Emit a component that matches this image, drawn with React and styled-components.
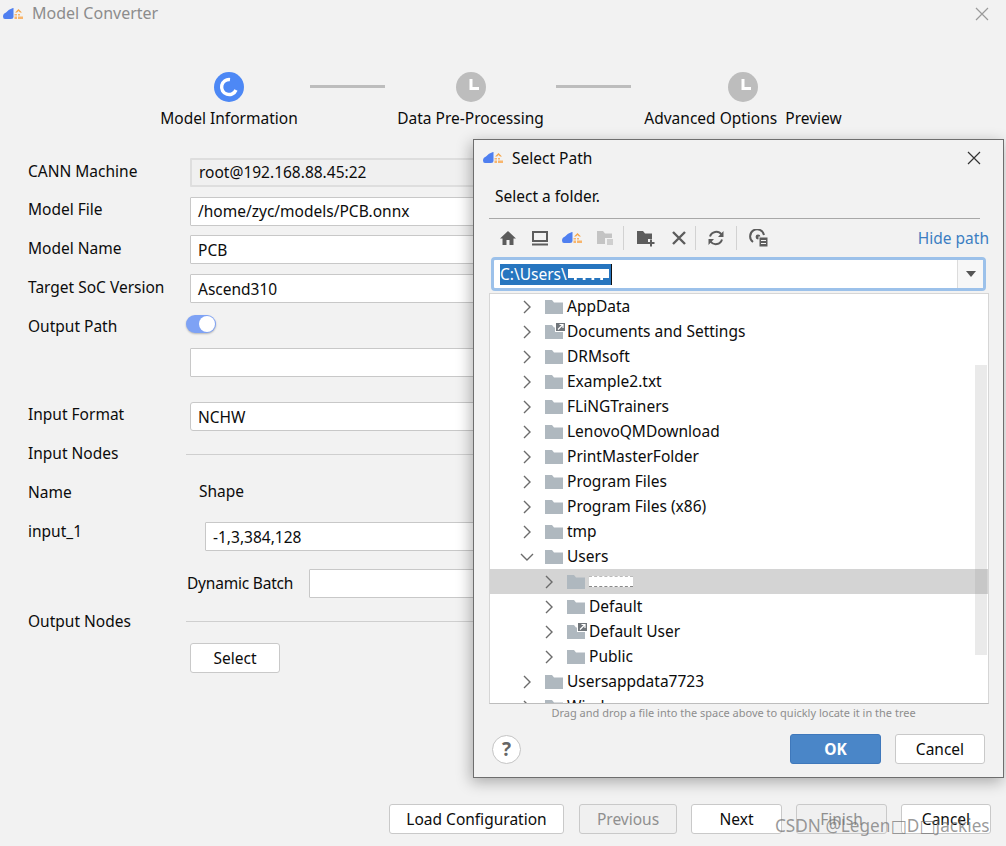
import React from "react";
import styled, { createGlobalStyle } from "styled-components";

const Global = createGlobalStyle`
  html, body { margin: 0; padding: 0; background: #f2f2f2; }
  * { box-sizing: border-box; }
  body { font-family: "Noto Sans", "Noto Sans CJK SC", sans-serif; font-size: 15.5px; color: #0c0c0c; }
`;

const Page = styled.div`
  position: relative; width: 1006px; height: 846px; overflow: hidden;
  display: flex; flex-direction: column; background: #f2f2f2;
`;
const TitleBar = styled.div`
  height: 28px; display: flex; align-items: center; padding: 0 17px 0 3px; gap: 9px;
  color: #8c8c8c; font-size: 16px;
`;
const TitleText = styled.span`flex: 1; transform: translateY(-1px);`;
const DialogTitle = styled.span`flex: 1;`;
const Stepper = styled.div`
  margin-top: 44px; height: 60px; display: flex; padding-left: 129px; align-items: flex-start;
`;
const Step = styled.div`
  width: ${p => p.$w}px; display: flex; flex-direction: column; align-items: center; gap: 6px;
  white-space: nowrap; line-height: 20px;
`;
const StepLine = styled.div`
  width: 75px; height: 3px; background: #bdbdbd; margin: 13px ${p => p.$r}px 0 ${p => p.$l}px;
`;
const Form = styled.div`
  margin-top: 26px; padding: 0 16px 0 28px; display: flex; flex-direction: column;
`;
const Row = styled.div`
  display: flex; align-items: center;
  min-height: ${p => p.$h || 29}px; margin-top: ${p => p.$mt || 0}px; line-height: 20px;
`;
const Label = styled.div`
  width: 158px; flex: none; white-space: nowrap;
  transform: translateY(${p => p.$dy ?? -1}px);
`;
const ShapeLabel = styled.div`
  margin-left: 13px; white-space: nowrap; transform: translateY(-1px);
`;
const InputText = styled.span`transform: translateY(${p => p.$dy ?? 0}px);`;
const Input = styled.div`
  flex: 1; height: 29px; margin-left: ${p => p.$ml ?? 4}px; padding: 0 7px;
  display: flex; align-items: center; white-space: nowrap;
  background: ${p => p.$ro ? "#f0f0f0" : "#fff"};
  border: ${p => p.$ro ? "2px solid #dedede" : "1px solid #c8c8c8"};
  border-radius: ${p => p.$round ? 3 : 1}px;
`;
const Toggle = styled.div`
  width: 30px; height: 18px; border-radius: 9px; background: #7ea2f5; position: relative;
  box-shadow: 0 1px 2px rgba(0,0,0,.25); transform: translateY(-3px);
  &::after { content: ""; position: absolute; right: 1px; top: 1px; width: 16px; height: 16px; border-radius: 50%; background: #fff; }
`;
const Rule = styled.div`flex: 1; height: 1px; background: #cfcfcf;`;
const Btn = styled.div`
  width: ${p => p.$w}px; height: 30px; flex: none; display: flex; align-items: center; justify-content: center;
  border-radius: 3px; white-space: nowrap; padding-bottom: 1px; margin-right: ${p => p.$mr || 0}px;
  border: 1px solid ${p => p.$primary ? "#3f78bb" : "#c9c9c9"};
  background: ${p => p.$primary ? "#4a86c8" : p.$off ? "#f0f0f0" : "#fff"};
  color: ${p => p.$primary ? "#fff" : p.$off ? "#8f8f8f" : "#0c0c0c"};
  font-weight: ${p => p.$primary ? 700 : 400};
`;
const SelectBtn = styled(Btn)`margin-left: 4px;`;
const Footer = styled.div`
  margin-top: auto; padding: 0 15px 12px 0; display: flex; justify-content: flex-end; gap: 14px;
`;
const Dialog = styled.div`
  position: absolute; left: 473px; top: 139px; width: 531px; height: 639px;
  background: #f2f2f2; border: 1px solid #6e6e6e;
  box-shadow: -2px 4px 14px rgba(0,0,0,.3);
  display: flex; flex-direction: column;
`;
const DialogHead = styled.div`
  height: 36px; display: flex; align-items: center; gap: 9px; padding: 0 22px 0 9px;
`;
const Hint = styled.div`margin: 9px 0 0 21px; line-height: 22px;`;
const Divider = styled.div`height: 1px; background: #a8a8a8; margin: 11px 23px 0 15px;`;
const Toolbar = styled.div`
  height: 36px; display: flex; align-items: center; padding: 0 14px 0 25px; margin-top: 1px;
`;
const ToolIcon = styled.div`
  width: ${p => p.$w || 18}px; height: 18px; margin-right: ${p => p.$mr || 0}px; flex: none;
  display: flex; align-items: center;
`;
const Sep = styled.div`width: 1px; height: 24px; background: #d2d2d2; margin-right: ${p => p.$mr}px; flex: none;`;
const HideLink = styled.div`margin-left: auto; color: #3c7ec2;`;
const Combo = styled.div`
  height: 34px; margin: 1px 17px 0 17px; display: flex; background: #fff;
  border: 3px solid #9cc1ea; border-radius: 4px;
`;
const ComboText = styled.div`flex: 1; display: flex; align-items: center; padding-left: 6px;`;
const Selected = styled.span`
  display: flex; align-items: center; height: 21px; background: #2675bf; color: #fff;
  border-right: 1px solid #111; padding-right: 2px;
`;
const Scribble = styled.span`width: 41px; height: 11px; margin-left: 1px; background: #fff; border-bottom: 2px dashed #2675bf; display: block;`;
const ComboArrow = styled.div`
  width: 26px; border-left: 1px solid #dcdcdc; display: flex; align-items: center; justify-content: center;
  background: #f7f7f7;
  &::after { content: ""; border: 5px solid transparent; border-top: 6px solid #555; border-bottom: 0; }
`;
const Tree = styled.div`
  position: relative; height: 411px; margin: 2px 14px 0 15px; background: #fff;
  border: 1px solid #d6d6d6; border-bottom-color: #bdbdbd; overflow: hidden;
`;
const TreeRow = styled.div`
  height: 25px; display: flex; align-items: center; white-space: nowrap;
  padding-left: ${p => 30 + p.$lvl * 22}px;
  background: ${p => p.$sel ? "#d4d4d4" : "transparent"};
`;
const Chevron = styled.div`width: 14px; height: 14px; flex: none; margin-right: 10px; display: flex; color: #6b6b6b;`;
const TreeName = styled.span`margin-left: 2px; transform: translateY(-1px);`;
const RowBlot = styled.span`width: 44px; height: 11px; margin-left: 2px; background: #fff; border-top: 1px dashed #bbb; border-bottom: 1px dashed #888;`;
const Scrollbar = styled.div`
  position: absolute; right: 1px; top: 71px; width: 12px; height: 290px; background: rgba(150,150,150,.2);
`;
const DragHint = styled.div`
  text-align: center; font-size: 11px; color: #8e8e8e; line-height: 16px; margin: 1px 10px 0 0;
`;
const DialogFoot = styled.div`
  margin-top: 13px; display: flex; align-items: center; padding: 0 18px 0 18px; gap: 14px;
`;
const Help = styled.div`
  width: 29px; height: 29px; border-radius: 50%; border: 1px solid #c4c4c4; background: #fff;
  margin-right: auto; display: flex; align-items: center; justify-content: center;
  font-weight: 700; font-size: 19px; color: #666;
`;
const Watermark = styled.div`
  position: absolute; left: 775px; top: 813px; font-size: 17.2px; line-height: 26px; white-space: nowrap;
  color: rgba(110,110,110,.7); font-family: "Noto Sans", "DejaVu Sans", sans-serif;
`;
const DynLabel = styled.div`
  margin-left: 1px; white-space: nowrap; width: 122px; flex: none; transform: translateY(-1px);
  letter-spacing: -0.2px;
`;

const Logo = () => (
  <svg width="20" height="12" viewBox="0 0 20 12" style={{ flex: "none" }}>
    <path d="M0 8.5 Q0 5.5 3 4.5 Q5.5 1 10 0 L10.5 0 V9 Q10.5 11 8 11 H2 Q0 11 0 8.5Z" fill="#4f7ff0" />
    <path d="M12 4.5 L15.5 1 L19 4.5 H17 L15.5 3 L14 4.5Z" fill="#f5a54a" />
    <path d="M11.5 6h2.5v1.5h-2.5zM15 6h2v1.5h-2zM11.5 8.5h2.5v2.5h-2.5zM15 8.5h5v2.5h-5z" fill="#f8b56c" />
  </svg>
);
const Spin = () => (
  <svg width="30" height="30" viewBox="0 0 30 30">
    <circle cx="15" cy="15" r="15" fill="#4d88f5" />
    <path d="M16 7.6 A7.5 7.5 0 1 0 22 18" fill="none" stroke="#fff" strokeWidth="3.4" />
  </svg>
);
const Clock = () => (
  <svg width="30" height="30" viewBox="0 0 30 30">
    <circle cx="15" cy="15" r="15" fill="#bdbdbd" />
    <path d="M15 7 V16.5 H23" fill="none" stroke="#fff" strokeWidth="3" />
  </svg>
);
const CloseX = ({ c, s = 14 }) => (
  <svg width={s} height={s} viewBox="0 0 14 14"><path d="M1 1 L13 13 M13 1 L1 13" stroke={c} strokeWidth="1.2" fill="none" /></svg>
);
const Folder = ({ link }) => (
  <svg width="21" height="18" viewBox="0 0 21 18" style={{ flex: "none" }}>
    <path d="M1 2 H8 L10 4.5 H19 V16 H1Z" fill="#afb8bf" />
    {link && <>
      <rect x="11" y="0" width="10" height="9" fill="#fff" />
      <rect x="12" y="0" width="9" height="8" fill="#70757a" />
      <path d="M14 6.5 L19 1.5 M15.5 1.5 H19 V5" stroke="#fff" strokeWidth="1.2" fill="none" />
    </>}
  </svg>
);
const ChevR = () => (
  <svg width="14" height="14" viewBox="0 0 14 14"><path d="M4 1 L10 7 L4 13" fill="none" stroke="currentColor" strokeWidth="1.4" /></svg>
);
const ChevD = () => (
  <svg width="14" height="14" viewBox="0 0 14 14"><path d="M1 4 L7 10 L13 4" fill="none" stroke="currentColor" strokeWidth="1.4" /></svg>
);
const T = ({ children, w = 18 }) => <svg width={w} height="18" viewBox={`0 0 ${w} 18`}>{children}</svg>;

const tree = [
  { n: "AppData", l: 0 },
  { n: "Documents and Settings", l: 0, link: 1 },
  { n: "DRMsoft", l: 0 },
  { n: "Example2.txt", l: 0 },
  { n: "FLiNGTrainers", l: 0 },
  { n: "LenovoQMDownload", l: 0 },
  { n: "PrintMasterFolder", l: 0 },
  { n: "Program Files", l: 0 },
  { n: "Program Files (x86)", l: 0 },
  { n: "tmp", l: 0 },
  { n: "Users", l: 0, open: 1 },
  { n: "", l: 1, sel: 1 },
  { n: "Default", l: 1 },
  { n: "Default User", l: 1, link: 1 },
  { n: "Public", l: 1 },
  { n: "Usersappdata7723", l: 0 },
  { n: "Windows", l: 0 },
];

export default function App() {
  return (
    <Page>
      <Global />
      <TitleBar>
        <Logo />
        <TitleText>Model Converter</TitleText>
        <CloseX c="#9a9a9a" />
      </TitleBar>
      <Stepper>
        <Step $w={200}><Spin />Model Information</Step>
        <StepLine $l={-19} $r={0} />
        <Step $w={171}><Clock />Data Pre-Processing</Step>
        <StepLine $l={0} $r={0} />
        <Step $w={224}><Clock /><span>Advanced Options&nbsp;&nbsp;Preview</span></Step>
      </Stepper>
      <Form>
        <Row><Label $dy={-2}>CANN Machine</Label><Input $ro><InputText $dy={-1}>root@192.168.88.45:22</InputText></Input></Row>
        <Row $mt={10}><Label $dy={-3}>Model File</Label><Input><InputText $dy={-1}>/home/zyc/models/PCB.onnx</InputText></Input></Row>
        <Row $mt={9}><Label $dy={-2}>Model Name</Label><Input><InputText>PCB</InputText></Input></Row>
        <Row $mt={10}><Label $dy={-2}>Target SoC Version</Label><Input><InputText>Ascend310</InputText></Input></Row>
        <Row $mt={9}><Label>Output Path</Label><Toggle /></Row>
        <Row $mt={7}><Label /><Input /></Row>
        <Row $mt={25}><Label $dy={-3}>Input Format</Label><Input $round><InputText>NCHW</InputText></Input></Row>
        <Row $mt={13} $h={20}><Label>Input Nodes</Label><Rule /></Row>
        <Row $mt={18} $h={20}><Label $dy={0}>Name</Label><ShapeLabel>Shape</ShapeLabel></Row>
        <Row $mt={20}><Label $dy={-6}>input_1</Label><Input $ml={19}><InputText>-1,3,384,128</InputText></Input></Row>
        <Row $mt={18}><Label /><DynLabel>Dynamic Batch</DynLabel><Input $ml={0} /></Row>
        <Row $mt={13} $h={20}><Label $dy={0}>Output Nodes</Label><Rule /></Row>
        <Row $mt={12}><Label /><SelectBtn $w={90}>Select</SelectBtn></Row>
      </Form>
      <Footer>
        <Btn $w={175} $mr={1}>Load Configuration</Btn>
        <Btn $w={98} $off>Previous</Btn>
        <Btn $w={91}>Next</Btn>
        <Btn $w={91} $off>Finish</Btn>
        <Btn $w={90}>Cancel</Btn>
      </Footer>

      <Dialog>
        <DialogHead>
          <Logo />
          <DialogTitle>Select Path</DialogTitle>
          <CloseX c="#333" />
        </DialogHead>
        <Hint>Select a folder.</Hint>
        <Divider />
        <Toolbar>
          <ToolIcon $mr={14}><T><path d="M9 2 L17 9.5 H14.5 V16 H10.5 V11 H7.5 V16 H3.5 V9.5 H1Z" fill="#5c5c5c" /></T></ToolIcon>
          <ToolIcon $mr={13}><T><path d="M1 2 H17 V13 H1Z M3 4 V11 H15 V4Z M1 14.5 H17 V16.5 H1Z" fill="#5c5c5c" fillRule="evenodd" /></T></ToolIcon>
          <ToolIcon $w={21} $mr={13}><Logo /></ToolIcon>
          <ToolIcon $mr={9}><T><path d="M1 2 H7 L9 4.5 H16 V9 H9 V15 H1Z" fill="#c4c4c4" /><rect x="11" y="10" width="6" height="6" fill="#cfcfcf" /></T></ToolIcon>
          <Sep $mr={12} />
          <ToolIcon $w={19} $mr={15}><T w={19}><path d="M1 2 H7 L9 4.5 H16 V10 H12 V15 H1Z" fill="#5c5c5c" /><path d="M15 10.5 V17.5 M11.5 14 H18.5" stroke="#5c5c5c" strokeWidth="2" /></T></ToolIcon>
          <ToolIcon $mr={7}><T><path d="M3 3 L15 15 M15 3 L3 15" stroke="#5c5c5c" strokeWidth="2.4" /></T></ToolIcon>
          <Sep $mr={11} />
          <ToolIcon $mr={11}><T><path d="M3 7.5 A6.5 6.5 0 0 1 14.5 5.5 M15 10.5 A6.5 6.5 0 0 1 3.5 12.5" fill="none" stroke="#5c5c5c" strokeWidth="2" /><path d="M16.5 2 V8 H11Z M1.5 16 V10 H7Z" fill="#5c5c5c" /></T></ToolIcon>
          <Sep $mr={12} />
          <ToolIcon $w={20}><T w={20}><path d="M4 13 A7 7 0 1 1 15 6" fill="none" stroke="#5c5c5c" strokeWidth="2" /><circle cx="9" cy="8" r="2.4" fill="#5c5c5c" /><rect x="10" y="8" width="9" height="10" fill="#5c5c5c" stroke="#f2f2f2" /><path d="M12 11.5 H17 M12 14.5 H17" stroke="#f2f2f2" /></T></ToolIcon>
          <HideLink>Hide path</HideLink>
        </Toolbar>
        <Combo>
          <ComboText><Selected>C:\Users\<Scribble /></Selected></ComboText>
          <ComboArrow />
        </Combo>
        <Tree>
          {tree.map((r, i) => (
            <TreeRow key={i} $lvl={r.l} $sel={r.sel}>
              <Chevron>{r.open ? <ChevD /> : <ChevR />}</Chevron>
              <Folder link={r.link} />
              {r.n ? <TreeName>{r.n}</TreeName> : <RowBlot />}
            </TreeRow>
          ))}
          <Scrollbar />
        </Tree>
        <DragHint>Drag and drop a file into the space above to quickly locate it in the tree</DragHint>
        <DialogFoot>
          <Help>?</Help>
          <Btn $w={91} $primary>OK</Btn>
          <Btn $w={90}>Cancel</Btn>
        </DialogFoot>
      </Dialog>
      <Watermark>CSDN @Legen□D□Jackies</Watermark>
    </Page>
  );
}
